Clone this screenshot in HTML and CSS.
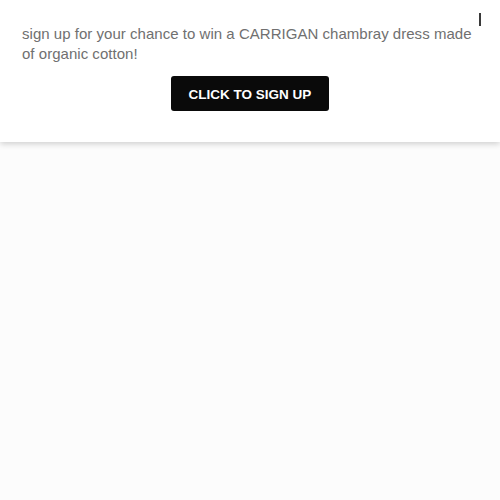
FILE: index.html
```html
<!DOCTYPE html>
<html>
<head>
<meta charset="utf-8">
<link rel="stylesheet" href="styles.css">
</head>
<body>
<div class="page">
  <div class="banner">
    <button class="close" aria-label="Close"><span class="bar"></span></button>
    <p class="message">sign up for your chance to win a CARRIGAN chambray dress made of organic cotton!</p>
    <div class="actions">
      <a class="cta" href="#">CLICK TO SIGN UP</a>
    </div>
  </div>
</div>
</body>
</html>
```
FILE: styles.css
```css
html, body {
  margin: 0;
  padding: 0;
  height: 100%;
}
body {
  background: #fcfcfc;
  font-family: "Liberation Sans", Arial, sans-serif;
}
.page {
  min-height: 100%;
}
.banner {
  position: relative;
  background: #ffffff;
  height: 142px;
  box-sizing: border-box;
  padding: 24px 22px 0 22px;
  box-shadow: 0 2px 6px rgba(0,0,0,0.18);
}
.message {
  margin: 0;
  width: 456px;
  font-size: 15px;
  line-height: 20px;
  letter-spacing: 0.03px;
  color: #707070;
}
.actions {
  display: flex;
  justify-content: center;
  margin-top: 12px;
}
.cta {
  display: flex;
  align-items: center;
  justify-content: center;
  width: 158px;
  height: 35px;
  padding-top: 1px;
  box-sizing: border-box;
  background: #0a0a0a;
  color: #ffffff;
  border-radius: 3px;
  font-weight: bold;
  font-size: 13.5px;
  text-decoration: none;
}
.close {
  position: absolute;
  top: 13px;
  right: 18px;
  width: 4px;
  height: 13px;
  padding: 0;
  border: 0;
  background: transparent;
}
.bar {
  display: block;
  margin: 0 auto;
  width: 2px;
  height: 13px;
  background: #3a3a3a;
}
```
